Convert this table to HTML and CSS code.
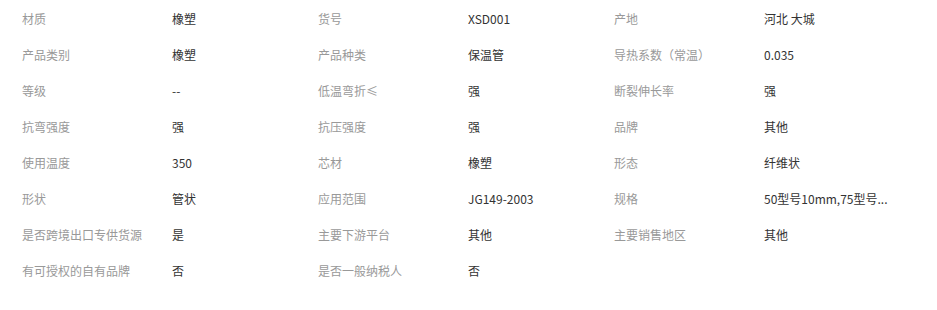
FILE: index.html
```html
<!DOCTYPE html>
<html lang="zh-CN">
<head>
<meta charset="utf-8">
<title>产品属性</title>
<link rel="stylesheet" href="styles.css">
</head>
<body>
<ul class="attrs">
  <li class="attr"><span class="label">材质</span><span class="value">橡塑</span></li>
  <li class="attr"><span class="label">货号</span><span class="value">XSD001</span></li>
  <li class="attr"><span class="label">产地</span><span class="value">河北 大城</span></li>
  <li class="attr"><span class="label">产品类别</span><span class="value">橡塑</span></li>
  <li class="attr"><span class="label">产品种类</span><span class="value">保温管</span></li>
  <li class="attr"><span class="label">导热系数（常温）</span><span class="value">0.035</span></li>
  <li class="attr"><span class="label">等级</span><span class="value">--</span></li>
  <li class="attr"><span class="label">低温弯折≤</span><span class="value">强</span></li>
  <li class="attr"><span class="label">断裂伸长率</span><span class="value">强</span></li>
  <li class="attr"><span class="label">抗弯强度</span><span class="value">强</span></li>
  <li class="attr"><span class="label">抗压强度</span><span class="value">强</span></li>
  <li class="attr"><span class="label">品牌</span><span class="value">其他</span></li>
  <li class="attr"><span class="label">使用温度</span><span class="value">350</span></li>
  <li class="attr"><span class="label">芯材</span><span class="value">橡塑</span></li>
  <li class="attr"><span class="label">形态</span><span class="value">纤维状</span></li>
  <li class="attr"><span class="label">形状</span><span class="value">管状</span></li>
  <li class="attr"><span class="label">应用范围</span><span class="value">JG149-2003</span></li>
  <li class="attr"><span class="label">规格</span><span class="value" title="50型号10mm,75型号15mm">50型号10mm,75型号...</span></li>
  <li class="attr"><span class="label">是否跨境出口专供货源</span><span class="value">是</span></li>
  <li class="attr"><span class="label">主要下游平台</span><span class="value">其他</span></li>
  <li class="attr"><span class="label">主要销售地区</span><span class="value">其他</span></li>
  <li class="attr"><span class="label">有可授权的自有品牌</span><span class="value">否</span></li>
  <li class="attr"><span class="label">是否一般纳税人</span><span class="value">否</span></li>
</ul>
</body>
</html>
```
FILE: styles.css
```css
html, body {
  margin: 0;
  padding: 0;
  background: #fff;
}
body {
  font-family: "Microsoft YaHei", "Noto Sans CJK SC", "Noto Sans", sans-serif;
  font-size: 12px;
  color: #333;
}
.attrs {
  list-style: none;
  margin: 0;
  padding: 0 0 0 22px;
  display: grid;
  grid-template-columns: repeat(3, 296px);
}
.attr {
  display: flex;
  align-items: center;
  height: 36px;
}
.label {
  flex: 0 0 150px;
  color: #999;
  white-space: nowrap;
}
.value {
  flex: 0 0 140px;
  color: #333;
  white-space: nowrap;
}
```
